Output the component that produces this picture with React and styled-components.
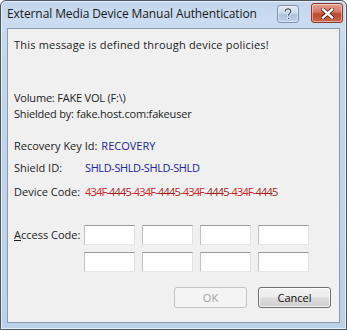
import React from 'react';
import styled, { createGlobalStyle } from 'styled-components';

const GlobalStyle = createGlobalStyle`
  html, body {
    margin: 0;
    padding: 0;
    background: #ffffff;
  }
  body {
    font-family: "Open Sans", "Liberation Sans", sans-serif;
  }
`;

const Window = styled.div`
  width: 347px;
  height: 330px;
  box-sizing: border-box;
  border: 1px solid #4a5560;
  border-radius: 6px 6px 0 0;
  background: linear-gradient(to bottom, #c3d6ec 0px, #cbdcf0 20px, #c4d6ec 60px, #bcd0e8 100%);
  display: flex;
  flex-direction: column;
  box-shadow: inset 0 0 0 1px #e6eef8;
`;

const TitleBar = styled.div`
  height: 26px;
  display: flex;
  align-items: flex-start;
  justify-content: space-between;
  padding: 0 3px 0 6px;
`;

const Title = styled.div`
  font-size: 12px;
  color: #1a1a1a;
  line-height: 26px;
  letter-spacing: -0.1px;
`;

const TitleButtons = styled.div`
  display: flex;
  gap: 12px;
  align-items: flex-start;
  padding-top: 1px;
`;

const CaptionButton = styled.div`
  width: ${p => p.$w}px;
  height: ${p => p.$h}px;
  margin-top: ${p => p.$top}px;
  box-sizing: border-box;
  border: 1px solid ${p => (p.$close ? '#8a3a2c' : '#7c90aa')};
  border-radius: 3px;
  background: ${p =>
    p.$close
      ? 'linear-gradient(to bottom, #e5a193 0%, #d37561 45%, #c0452e 55%, #c96a50 100%)'
      : 'linear-gradient(to bottom, #e4ecf6 0%, #c9d7e8 45%, #adc1da 55%, #c2d3e8 100%)'};
  display: flex;
  align-items: center;
  justify-content: center;
  box-shadow: inset 0 0 0 1px rgba(255, 255, 255, 0.45);
`;

const Content = styled.div`
  flex: 1;
  margin: 1px 6px 6px 6px;
  border: 1px solid #8b9bb0;
  background: #f0f0f0;
  padding: 8px 8px 0 6px;
  font-size: 11px;
  color: #1c1c1c;
`;

const Line = styled.div`
  height: 16px;
  line-height: 16px;
  margin-top: ${p => p.$mt || 0}px;
  display: flex;
  white-space: nowrap;
  letter-spacing: ${p => p.$ls || 0}px;
`;

const Label = styled.span`
  width: ${p => (p.$w ? `${p.$w}px` : 'auto')};
  flex: none;
  margin-right: ${p => p.$gap || 0}px;
`;

const Value = styled.span`
  color: ${p => p.$color || '#1c1c1c'};
  letter-spacing: ${p => p.$ls || 0}px;
`;

const Seg = styled.span`
  color: ${p => (p.$dark ? '#a11d1d' : '#d42424')};
`;

const AccessRow = styled.div`
  margin-top: 25px;
  display: flex;
`;

const AccessLabel = styled.div`
  width: 70px;
  flex: none;
  line-height: 16px;
  padding-top: 2px;
  u {
    text-decoration: underline;
    text-underline-offset: 1px;
  }
`;

const CodeGrid = styled.div`
  display: grid;
  grid-template-columns: repeat(4, 51px);
  column-gap: 7px;
  row-gap: 7px;
`;

const CodeBox = styled.div`
  height: 20px;
  box-sizing: border-box;
  background: #ffffff;
  border-style: solid;
  border-width: 1px;
  border-color: #9b9b9b #e1e1e1 #e8e8e8 #c2c2c2;
`;

const ButtonRow = styled.div`
  margin-top: 15px;
  display: flex;
  justify-content: flex-end;
  gap: 11px;
`;

const Button = styled.div`
  width: 73px;
  height: 21px;
  box-sizing: border-box;
  border-radius: 3px;
  border: 1px solid ${p => (p.$disabled ? '#c4c4c4' : '#707070')};
  background: ${p =>
    p.$disabled
      ? '#f4f4f4'
      : 'linear-gradient(to bottom, #f4f4f4 0%, #ebebeb 48%, #dddddd 52%, #cfcfcf 100%)'};
  color: ${p => (p.$disabled ? '#a3a3a3' : '#111111')};
  font-size: 11px;
  display: flex;
  align-items: center;
  justify-content: center;
  box-shadow: ${p => (p.$disabled ? 'none' : 'inset 0 0 0 1px rgba(255,255,255,0.7)')};
`;

const deviceCode = ['434F', '4445', '434F', '4445', '434F', '4445', '434F', '4445'];

export default function App() {
  return (
    <>
      <GlobalStyle />
      <Window>
        <TitleBar>
          <Title>External Media Device Manual Authentication</Title>
          <TitleButtons>
            <CaptionButton $w={22} $h={18} $top={3}>
              <svg width="10" height="12" viewBox="0 0 10 12">
                <path
                  d="M2.2 3.6 C2.2 1.6 3.6 0.9 5 0.9 C6.6 0.9 7.8 1.9 7.8 3.3 C7.8 5 5.6 5.3 5.6 7.2 L5.6 7.8"
                  fill="none"
                  stroke="#ffffff"
                  strokeWidth="2.6"
                />
                <path
                  d="M2.2 3.6 C2.2 1.6 3.6 0.9 5 0.9 C6.6 0.9 7.8 1.9 7.8 3.3 C7.8 5 5.6 5.3 5.6 7.2 L5.6 7.8"
                  fill="none"
                  stroke="#3c4e68"
                  strokeWidth="1.3"
                />
                <rect x="4.6" y="9.3" width="2" height="2" fill="#3c4e68" stroke="#ffffff" strokeWidth="0.6" />
              </svg>
            </CaptionButton>
            <CaptionButton $close $w={32} $h={20} $top={1}>
              <svg width="13" height="11" viewBox="0 0 13 11">
                <path d="M2 1.5 L11 9.5 M11 1.5 L2 9.5" stroke="#5a1e14" strokeWidth="4" strokeLinecap="square" />
                <path d="M2 1.5 L11 9.5 M11 1.5 L2 9.5" stroke="#ffffff" strokeWidth="2.4" strokeLinecap="square" />
              </svg>
            </CaptionButton>
          </TitleButtons>
        </TitleBar>
        <Content>
          <Line $ls={0.2}>This message is defined through device policies!</Line>
          <Line $mt={37} $ls={-0.2}>Volume: FAKE VOL (F:\)</Line>
          <Line $ls={-0.2}>Shielded by: fake.host.com:fakeuser</Line>
          <Line $mt={16}>
            <Label $gap={4}>Recovery Key Id:</Label>
            <Value $color="#23239a">RECOVERY</Value>
          </Line>
          <Line $mt={6}>
            <Label $w={71}>Shield ID:</Label>
            <Value $color="#23239a" $ls={-0.4}>SHLD-SHLD-SHLD-SHLD</Value>
          </Line>
          <Line $mt={8}>
            <Label $w={71}>Device Code:</Label>
            <Value $ls={-0.8}>
              {deviceCode.map((seg, i) => (
                <Seg key={i} $dark={i % 2 === 1}>
                  {i > 0 ? '-' : ''}
                  {seg}
                </Seg>
              ))}
            </Value>
          </Line>
          <AccessRow>
            <AccessLabel>
              <u>A</u>ccess Code:
            </AccessLabel>
            <CodeGrid>
              {Array.from({ length: 8 }).map((_, i) => (
                <CodeBox key={i} />
              ))}
            </CodeGrid>
          </AccessRow>
          <ButtonRow>
            <Button $disabled>OK</Button>
            <Button>Cancel</Button>
          </ButtonRow>
        </Content>
      </Window>
    </>
  );
}
